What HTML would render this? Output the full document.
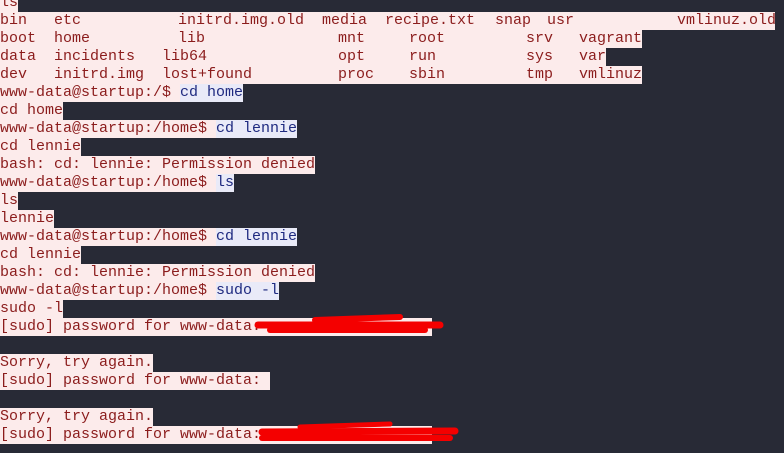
<!DOCTYPE html>
<html><head><style>
html,body{margin:0;padding:0;width:784px;height:453px;overflow:hidden;background:#282a36;}
.l{position:absolute;left:0;height:18px;font:15px/18px "Liberation Mono",monospace;white-space:pre;}
.l span{background:#fcebeb;color:#8b1c1c;display:inline-block;height:18px;}
.l span.c{background:#e9eaf8;color:#1f2a80;}
.w{position:absolute;font:15px/18px "Liberation Mono",monospace;color:#8b1c1c;white-space:pre;}
.bg{position:absolute;background:#fcebeb;height:18px;}
</style></head><body>
<div class="bg" style="left:0;top:-6px;width:18px"></div>
<div class="w" style="left:0;top:-6px">ls</div>
<div class="bg" style="left:0;top:12px;width:775px"></div>
<div class="bg" style="left:0;top:30px;width:642px"></div>
<div class="bg" style="left:0;top:48px;width:606px"></div>
<div class="bg" style="left:0;top:66px;width:642px"></div>
<div class="w" style="left:0;top:12px">bin</div><div class="w" style="left:54px;top:12px">etc</div><div class="w" style="left:178px;top:12px">initrd.img.old</div><div class="w" style="left:322px;top:12px">media</div><div class="w" style="left:385px;top:12px">recipe.txt</div><div class="w" style="left:495px;top:12px">snap</div><div class="w" style="left:547px;top:12px">usr</div><div class="w" style="left:677px;top:12px">vmlinuz.old</div>
<div class="w" style="left:0;top:30px">boot</div><div class="w" style="left:54px;top:30px">home</div><div class="w" style="left:178px;top:30px">lib</div><div class="w" style="left:338px;top:30px">mnt</div><div class="w" style="left:409px;top:30px">root</div><div class="w" style="left:526px;top:30px">srv</div><div class="w" style="left:579px;top:30px">vagrant</div>
<div class="w" style="left:0;top:48px">data</div><div class="w" style="left:54px;top:48px">incidents</div><div class="w" style="left:162px;top:48px">lib64</div><div class="w" style="left:338px;top:48px">opt</div><div class="w" style="left:409px;top:48px">run</div><div class="w" style="left:526px;top:48px">sys</div><div class="w" style="left:579px;top:48px">var</div>
<div class="w" style="left:0;top:66px">dev</div><div class="w" style="left:54px;top:66px">initrd.img</div><div class="w" style="left:162px;top:66px">lost+found</div><div class="w" style="left:338px;top:66px">proc</div><div class="w" style="left:409px;top:66px">sbin</div><div class="w" style="left:526px;top:66px">tmp</div><div class="w" style="left:579px;top:66px">vmlinuz</div>
<div class="l" style="top:84px"><span>www-data@startup:/$ </span><span class="c">cd home</span></div>
<div class="l" style="top:102px"><span>cd home</span></div>
<div class="l" style="top:120px"><span>www-data@startup:/home$ </span><span class="c">cd lennie</span></div>
<div class="l" style="top:138px"><span>cd lennie</span></div>
<div class="l" style="top:156px"><span>bash: cd: lennie: Permission denied</span></div>
<div class="l" style="top:174px"><span>www-data@startup:/home$ </span><span class="c">ls</span></div>
<div class="l" style="top:192px"><span>ls</span></div>
<div class="l" style="top:210px"><span>lennie</span></div>
<div class="l" style="top:228px"><span>www-data@startup:/home$ </span><span class="c">cd lennie</span></div>
<div class="l" style="top:246px"><span>cd lennie</span></div>
<div class="l" style="top:264px"><span>bash: cd: lennie: Permission denied</span></div>
<div class="l" style="top:282px"><span>www-data@startup:/home$ </span><span class="c">sudo -l</span></div>
<div class="l" style="top:300px"><span>sudo -l</span></div>
<div class="l" style="top:318px"><span style="width:432px">[sudo] password for www-data: </span></div>
<div class="l" style="top:354px"><span>Sorry, try again.</span></div>
<div class="l" style="top:372px"><span style="width:270px">[sudo] password for www-data: </span></div>
<div class="l" style="top:408px"><span>Sorry, try again.</span></div>
<div class="l" style="top:426px"><span style="width:432px">[sudo] password for www-data: </span></div>
<svg style="position:absolute;left:0;top:0" width="784" height="453">
<g stroke="#f40000" stroke-linecap="round" fill="none">
<path d="M258 325 L440 325" stroke-width="7"/>
<path d="M270 330 L425 330" stroke-width="6"/>
<path d="M315 320 L400 317" stroke-width="6"/>
<path d="M262 432 L455 431" stroke-width="7"/>
<path d="M262 438 L450 438" stroke-width="6"/>
<path d="M300 427 L390 424" stroke-width="5"/>
</g></svg>
</body></html>
